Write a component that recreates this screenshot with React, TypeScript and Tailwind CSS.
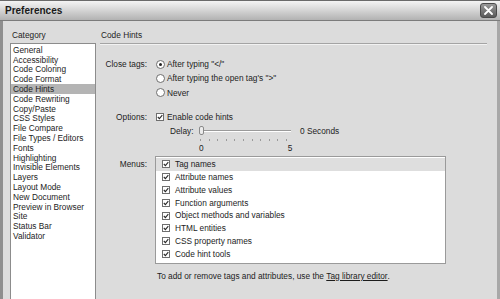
import React from "react";

const categories = [
  "General",
  "Accessibility",
  "Code Coloring",
  "Code Format",
  "Code Hints",
  "Code Rewriting",
  "Copy/Paste",
  "CSS Styles",
  "File Compare",
  "File Types / Editors",
  "Fonts",
  "Highlighting",
  "Invisible Elements",
  "Layers",
  "Layout Mode",
  "New Document",
  "Preview in Browser",
  "Site",
  "Status Bar",
  "Validator",
];

const menus = [
  "Tag names",
  "Attribute names",
  "Attribute values",
  "Function arguments",
  "Object methods and variables",
  "HTML entities",
  "CSS property names",
  "Code hint tools",
];

function Radio({ checked }: { checked?: boolean }) {
  return (
    <span className="w-[9px] h-[9px] rounded-full border border-[#6e6e6e] bg-white flex items-center justify-center shrink-0">
      {checked && <span className="w-[3px] h-[3px] rounded-full bg-[#222]" />}
    </span>
  );
}

function Check() {
  return (
    <span className="w-[8px] h-[8px] border border-[#6e6e6e] bg-white flex items-center justify-center shrink-0">
      <svg width="6" height="6" viewBox="0 0 6 6">
        <path d="M0.8 3 L2.4 4.6 L5.3 1.2" fill="none" stroke="#2a2a2a" strokeWidth="1.1" />
      </svg>
    </span>
  );
}

export default function App() {
  return (
    <div
      className="w-[500px] h-[299px] overflow-hidden bg-[#dcdcdc] flex flex-col text-[#1c1c1c] text-[8.3px] leading-none"
      style={{ fontFamily: '"Liberation Sans", Arial, sans-serif' }}
    >
      {/* Title bar */}
      <div className="h-[21px] shrink-0 flex items-center justify-between border-t border-[#6a6a6a] border-b border-b-[#7c7c7c] bg-gradient-to-b from-[#f4f4f4] via-[#d4d4d4] to-[#b2b2b2] pl-[5px] pr-[3px]">
        <span className="text-[10px] font-bold text-[#1a1a1a]">Preferences</span>
        <span className="w-[17px] h-[15px] rounded-[3px] border border-[#4a4a4a] bg-gradient-to-b from-[#9a9a9a] to-[#5a5a5a] flex items-center justify-center">
          <svg width="9" height="9" viewBox="0 0 9 9">
            <path d="M1 1 L8 8 M8 1 L1 8" stroke="#ffffff" strokeWidth="1.8" strokeLinecap="round" />
          </svg>
        </span>
      </div>

      {/* Body */}
      <div className="flex-1 flex border-l-[3px] border-l-[#8e8e8e] border-r-[3px] border-r-[#a8a8a8] min-h-0">
        {/* Category column */}
        <div className="ml-[7px] w-[86px] flex flex-col">
          <div className="mt-[8px] h-[12px] pl-[2px] flex items-center">Category</div>
          <div className="mt-[2px] flex-1 bg-white border border-[#8c8c8c] border-b-0 pt-[1px]">
            {categories.map((c) => (
              <div
                key={c}
                className={`h-[9.8px] flex items-center pl-[2px] whitespace-nowrap ${
                  c === "Code Hints" ? "bg-[#b4b4b4]" : ""
                }`}
              >
                {c}
              </div>
            ))}
          </div>
        </div>

        {/* Right panel */}
        <div className="ml-[4px] w-[387px] flex flex-col">
          <div className="mt-[8px] h-[12px] pl-[1px] flex items-center">Code Hints</div>
          <div className="mt-[2px] h-[1px] bg-[#a4a4a4]" />
          <div className="h-[1px] bg-[#f2f2f2]" />

          {/* Close tags */}
          <div className="mt-[12px] flex">
            <div className="w-[47px] h-[14px] flex items-center justify-end">Close tags:</div>
            <div className="ml-[9px] flex flex-col">
              <div className="h-[14px] flex items-center gap-[2px]">
                <Radio checked />
                <span>After typing "&lt;/"</span>
              </div>
              <div className="h-[14.5px] flex items-center gap-[2px]">
                <Radio />
                <span>After typing the open tag's "&gt;"</span>
              </div>
              <div className="h-[14.5px] flex items-center gap-[2px]">
                <Radio />
                <span>Never</span>
              </div>
            </div>
          </div>

          {/* Options */}
          <div className="mt-[10px] flex">
            <div className="w-[47px] h-[14px] flex items-center justify-end">Options:</div>
            <div className="ml-[9px] flex flex-col">
              <div className="h-[14px] flex items-center gap-[3px]">
                <Check />
                <span>Enable code hints</span>
              </div>
              <div className="h-[14px] flex items-center pl-[14px]">
                <span className="w-[29px]">Delay:</span>
                <div className="relative w-[92px] h-[14px]">
                  <div className="absolute left-0 right-0 top-[6px] h-[2px] border-t border-[#9a9a9a] border-b border-b-white" />
                  <div className="absolute left-0 top-[2px] w-[5px] h-[9px] rounded-[2px] border border-[#8a8a8a] bg-[#ececec]" />
                </div>
                <span className="ml-[9px]">0 Seconds</span>
              </div>
              <div className="pl-[44px] h-[4px] flex gap-[7.6px]">
                {Array.from({ length: 11 }).map((_, i) => (
                  <span key={i} className="w-[1px] h-[2px] mt-[1px] bg-[#9a9a9a]" />
                ))}
              </div>
              <div className="pl-[43px] h-[12px] flex items-center w-[140px]">
                <span>0</span>
                <span className="ml-[84px]">5</span>
              </div>
            </div>
          </div>

          {/* Menus */}
          <div className="mt-[2px] flex">
            <div className="w-[47px] pt-[3px] h-[14px] flex items-center justify-end">Menus:</div>
            <div className="ml-[8px] w-[291px] h-[108px] bg-white border border-[#9a9a9a] pt-[1px]">
              {menus.map((m, i) => (
                <div
                  key={m}
                  className={`h-[12.8px] flex items-center gap-[5px] pl-[6px] ${i === 0 ? "bg-[#dedede]" : ""}`}
                >
                  <Check />
                  <span>{m}</span>
                </div>
              ))}
            </div>
          </div>

          <div className="mt-[6px] ml-[57px] h-[12px] flex items-center whitespace-nowrap">
            To add or remove tags and attributes, use the&nbsp;
            <span className="underline">Tag library editor</span>.
          </div>
        </div>
      </div>
    </div>
  );
}
